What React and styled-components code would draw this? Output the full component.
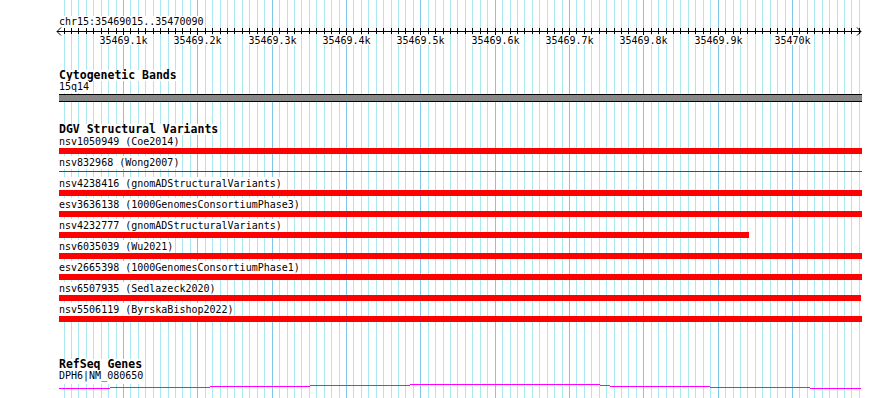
import React from "react";
import styled, { createGlobalStyle } from "styled-components";

const GlobalStyle = createGlobalStyle`
  html, body { margin: 0; padding: 0; background: #ffffff; }
  #root { width: 890px; height: 398px; }
`;

const START = 35469015;
const END = 35470090;
const X0 = 59.8;
const SCALE = 0.74333;
const LEFT = 59;
const TRACK_W = 803;
const GENE_TOP = 383;
const toX = (b) => Math.round(X0 + (b - START) * SCALE);

const gridBases = [];
for (let b = 35469020; b <= END; b += 10) gridBases.push(b);

const majorLabels = [
  [35469100, "35469.1k"],
  [35469200, "35469.2k"],
  [35469300, "35469.3k"],
  [35469400, "35469.4k"],
  [35469500, "35469.5k"],
  [35469600, "35469.6k"],
  [35469700, "35469.7k"],
  [35469800, "35469.8k"],
  [35469900, "35469.9k"],
  [35470000, "35470k"],
];

const variants = [
  { name: "nsv1050949 (Coe2014)", end: 862 },
  { name: "nsv832968 (Wong2007)", end: 862, thin: true },
  { name: "nsv4238416 (gnomADStructuralVariants)", end: 862 },
  { name: "esv3636138 (1000GenomesConsortiumPhase3)", end: 862 },
  { name: "nsv4232777 (gnomADStructuralVariants)", end: 749 },
  { name: "nsv6035039 (Wu2021)", end: 862 },
  { name: "esv2665398 (1000GenomesConsortiumPhase1)", end: 862 },
  { name: "nsv6507935 (Sedlazeck2020)", end: 861 },
  { name: "nsv5506119 (ByrskaBishop2022)", end: 862 },
];

const geneSteps = [
  [59, 110, 387],
  [110, 210, 386],
  [210, 310, 385],
  [310, 410, 384],
  [410, 600, 383],
  [600, 610, 384],
  [610, 710, 385],
  [710, 810, 386],
  [810, 861, 387],
];

const Page = styled.div`
  position: relative;
  width: 890px;
  height: 398px;
  overflow: hidden;
  background: #ffffff;
  font-family: "DejaVu Sans Mono", "Liberation Mono", monospace;
  color: #000000;
`;

const GridLayer = styled.svg`
  position: absolute;
  left: 0;
  top: 0;
  z-index: 0;
`;

const Tracks = styled.div`
  position: relative;
  z-index: 1;
  width: ${TRACK_W}px;
  padding: 16px 0 0 ${LEFT}px;
  display: flex;
  flex-direction: column;
  align-items: flex-start;
`;

const LocLabel = styled.div`
  font-size: 10px;
  line-height: 12px;
  height: 12px;
  background: #ffffff;
  white-space: pre;
`;

const RulerSvg = styled.svg`
  display: block;
  overflow: visible;
`;

const TrackTitle = styled.div`
  margin-top: ${(p) => p.$gap}px;
  font-size: 11.5px;
  font-weight: bold;
  line-height: 11px;
  height: 11px;
  background: #ffffff;
  white-space: pre;
`;

const SubLabel = styled.div`
  font-size: 10px;
  line-height: 12px;
  height: ${(p) => p.$h || 12}px;
  background: #ffffff;
  white-space: pre;
`;

const Band = styled.div`
  margin-top: 1px;
  width: ${TRACK_W}px;
  height: 6px;
  background: #888888;
  border-top: 1px solid #000000;
  border-bottom: 1px solid #000000;
`;

const VariantList = styled.div`
  display: flex;
  flex-direction: column;
  align-items: flex-start;
  gap: 2px;
`;

const VariantRow = styled.div`
  display: flex;
  flex-direction: column;
  align-items: flex-start;
`;

const RowLabel = styled.div`
  font-size: 10px;
  line-height: 13px;
  height: 13px;
  background: #ffffff;
  white-space: pre;
`;

const BarSlot = styled.div`
  height: 6px;
  display: flex;
  align-items: ${(p) => (p.$thin ? "flex-start" : "stretch")};
  padding-top: ${(p) => (p.$thin ? 2 : 0)}px;
  box-sizing: border-box;
`;

const Bar = styled.div`
  background: #ff0000;
  height: ${(p) => (p.$thin ? "1px" : "6px")};
`;

const GeneSvg = styled.svg`
  display: block;
  overflow: visible;
`;

function Grid() {
  return (
    <GridLayer width="890" height="398" shapeRendering="crispEdges">
      {gridBases.map((b) => {
        const x = toX(b) + 0.5;
        const major = b % 100 === 0;
        return (
          <line
            key={b}
            x1={x}
            x2={x}
            y1={0}
            y2={398}
            stroke={major ? "#80c6ea" : "#a8e8ee"}
            strokeWidth="1"
          />
        );
      })}
    </GridLayer>
  );
}

function Ruler() {
  const w = TRACK_W;
  const ly = 3.5;
  return (
    <RulerSvg width={w} height="20" shapeRendering="crispEdges">
      <line x1={-2} x2={802} y1={ly} y2={ly} stroke="#000" strokeWidth="1" />
      <polyline
        points={`2,-0.5 -2,${ly} 2,7.5`}
        fill="none"
        stroke="#000"
        strokeWidth="1"
        shapeRendering="auto"
      />
      <polyline
        points={`798,-0.5 802,${ly} 798,7.5`}
        fill="none"
        stroke="#000"
        strokeWidth="1"
        shapeRendering="auto"
      />
      {gridBases.map((b) => {
        const x = toX(b) - LEFT + 0.5;
        return (
          <line
            key={b}
            x1={x}
            x2={x}
            y1={0}
            y2={b % 100 === 0 ? 7 : 6}
            stroke="#000"
            strokeWidth="1"
          />
        );
      })}
      {majorLabels.map(([b, t]) => {
        const cx = toX(b) - LEFT + 0.5;
        const tw = t.length * 6.02;
        return (
          <g key={b}>
            <rect x={cx - tw / 2 - 1} y={7} width={tw + 2} height={10} fill="#fff" />
            <text
              x={cx}
              y={15.5}
              textAnchor="middle"
              fontFamily='"DejaVu Sans Mono", "Liberation Mono", monospace'
              fontSize="10"
              fill="#000"
            >
              {t}
            </text>
          </g>
        );
      })}
    </RulerSvg>
  );
}

function GeneLine() {
  const d = geneSteps
    .map(
      ([a, b, y]) =>
        `M${a - LEFT},${y - GENE_TOP + 0.5} L${b - LEFT},${y - GENE_TOP + 0.5}`
    )
    .join(" ");
  return (
    <GeneSvg width={TRACK_W} height="8" shapeRendering="crispEdges">
      <path d={d} stroke="#ff00ff" strokeWidth="1" fill="none" />
    </GeneSvg>
  );
}

export default function App() {
  return (
    <>
      <GlobalStyle />
      <Page>
        <Grid />
        <Tracks>
          <LocLabel>chr15:35469015..35470090</LocLabel>
          <Ruler />
          <TrackTitle $gap={22}>Cytogenetic Bands</TrackTitle>
          <SubLabel>15q14</SubLabel>
          <Band />
          <TrackTitle $gap={22}>DGV Structural Variants</TrackTitle>
          <VariantList>
            {variants.map((v) => (
              <VariantRow key={v.name}>
                <RowLabel>{v.name}</RowLabel>
                <BarSlot $thin={v.thin}>
                  <Bar $thin={v.thin} style={{ width: `${v.end - LEFT}px` }} />
                </BarSlot>
              </VariantRow>
            ))}
          </VariantList>
          <TrackTitle $gap={37}>RefSeq Genes</TrackTitle>
          <SubLabel $h={14}>DPH6|NM_080650</SubLabel>
          <GeneLine />
        </Tracks>
      </Page>
    </>
  );
}
